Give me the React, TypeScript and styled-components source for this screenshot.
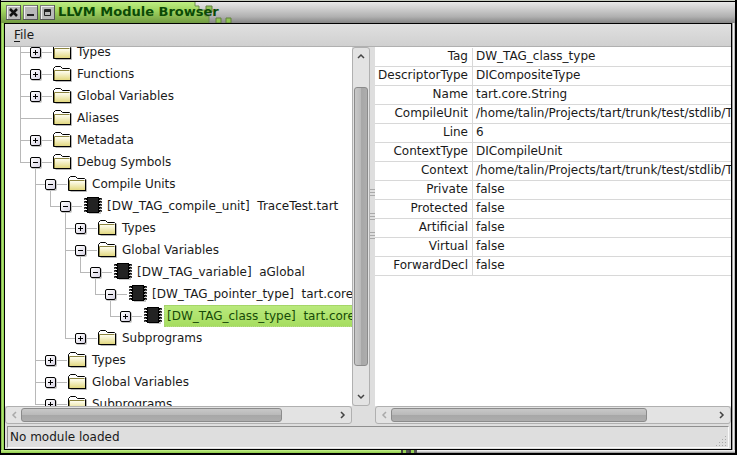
import React from "react";
import styled, { createGlobalStyle, css } from "styled-components";

const Global = createGlobalStyle`
  * { box-sizing: border-box; }
  body { margin: 0; background: #000; overflow: hidden; }
  button { font: inherit; padding: 0; margin: 0; border: 0; background: none; }
`;

const Desktop = styled.div`
  height: 100vh;
  display: flex;
  flex-direction: column;
  padding: 0 2px 2px 1px;
  background: #000;
  color: #1a1a1a;
  font: 12px/22px "DejaVu Sans", sans-serif;
`;

const Backdrop = styled.div`
  flex: none;
  height: 1px;
  margin-bottom: 1px;
  background: #c6cbc0;
`;

const Frame = styled.div`
  flex: 1;
  min-height: 0;
  display: flex;
  flex-direction: column;
  padding: 0 3px 3px;
  background:
    linear-gradient(#fafafa, #d0d0d0 50%, #888) bottom right / calc(100% - 416px) 3px no-repeat,
    repeating-linear-gradient(90deg, #444 0 2px, #96d055 2px 5px, #555 5px 8px) 400px bottom / 16px 3px no-repeat,
    linear-gradient(#c5f08c, #8ecb4b) bottom left / 400px 3px no-repeat,
    linear-gradient(90deg, #6e9a3c, #b4ea78 40%, #8ccb4a) left / 3px 100% no-repeat,
    linear-gradient(90deg, #777, #f0f0f0 50%, #a0a0a0) right / 3px 100% no-repeat;
`;

const TitleBar = styled.header`
  position: relative;
  flex: none;
  height: 21px;
  margin: 0 -3px;
  display: flex;
  align-items: center;
  padding-left: 5px;
  gap: 2px;
  background: linear-gradient(#e8e8e8, #d0d0d0 30%, #b0b0b0 70%, #858585);
`;

const GreenWash = styled.svg`
  position: absolute;
  left: 0;
  top: 0;
`;

const WindowButton = styled.button`
  position: relative;
  width: 15px;
  height: 15px;
  svg { display: block; }
`;

const Title = styled.h1`
  position: relative;
  margin: 0 0 2px 1px;
  color: #0b4a06;
  font: bold 13px/19px "DejaVu Sans", sans-serif;
  white-space: nowrap;
`;

const Client = styled.div`
  flex: 1;
  min-height: 0;
  display: flex;
  flex-direction: column;
  border: 1px solid #000;
  background: #dedede;
`;

const MenuBar = styled.nav`
  flex: none;
  height: 23px;
  display: flex;
  padding-left: 9px;
  border-bottom: 1px solid #b0b0b0;
  background: linear-gradient(#e0e0e0, #d0d0d0);
`;

const MenuButton = styled.button`
  line-height: 22px;
  color: #1a1a1a;
  u { text-underline-offset: 2px; }
`;

const Split = styled.main`
  flex: 1;
  min-height: 0;
  display: grid;
  grid-template-columns: 365fr 5px 356fr;
`;

const TreePane = styled.section`
  min-width: 0;
  min-height: 0;
  display: grid;
  grid-template-columns: minmax(0, 1fr) 18px;
  grid-template-rows: minmax(0, 1fr) 18px;
`;

const DetailPane = styled.section`
  min-width: 0;
  min-height: 0;
  display: grid;
  grid-template-rows: minmax(0, 1fr) 18px;
`;

const Viewport = styled.div`
  overflow: hidden;
  background: #fff;
`;

const Tree = styled.ul`
  list-style: none;
  margin: -6px 0 0;
  padding: 0 0 0 8px;
`;

const TreeRow = styled.li`
  display: flex;
  height: 22px;
`;

const line = "linear-gradient(#b8b8b8, #b8b8b8)";
type GuideKind = "none" | "pass" | "tee" | "end";

const Guide = styled.span<{ $kind: GuideKind }>`
  flex: none;
  width: 15px;
  background-repeat: no-repeat;
  ${({ $kind }) =>
    $kind === "pass" &&
    css`background-image: ${line}; background-size: 1px 100%; background-position: 7px 0;`}
  ${({ $kind }) =>
    $kind === "tee" &&
    css`background-image: ${line}, ${line}; background-size: 1px 100%, 8px 1px; background-position: 7px 0, 7px 11px;`}
  ${({ $kind }) =>
    $kind === "end" &&
    css`background-image: ${line}, ${line}; background-size: 1px 12px, 8px 1px; background-position: 7px 0, 7px 11px;`}
`;

const Branch = styled.span<{ $open: boolean }>`
  flex: none;
  width: 25px;
  padding: 6px 0 0 2px;
  background-repeat: no-repeat;
  background-image: ${line}, ${line};
  background-size: 24px 1px, 1px ${({ $open }) => ($open ? "11px" : "0")};
  background-position: 0 11px, 7px 11px;
`;

const Expander = styled.button`
  display: block;
  width: 11px;
  height: 11px;
  border: 1px solid #000;
  border-radius: 2px;
  background: linear-gradient(135deg, #fff, #d8d4e4);
  box-shadow: 1px 1px 0 #c4c4c4;
  svg { display: block; }
`;

const NodeIcon = styled.svg`
  flex: none;
  display: block;
  width: 20px;
  height: 22px;
`;

const Label = styled.span<{ $selected?: boolean }>`
  flex: 1;
  min-width: 0;
  padding-left: 4px;
  white-space: pre;
  overflow: hidden;
  ${({ $selected }) =>
    $selected &&
    css`
      padding-left: 2px;
      margin-left: 1px;
      border: 1px dotted #a5cf70;
      border-right: 0;
      line-height: 20px;
      color: #174a08;
      background: linear-gradient(#b9e97c, #a6dd60);
    `}
`;

const ScrollBar = styled.div<{ $vertical?: boolean }>`
  display: flex;
  flex-direction: ${({ $vertical }) => ($vertical ? "column" : "row")};
  border: 1px solid #b0b0b0;
  border-radius: 3px;
  background: #e3e3e3;
  padding: 1px;
`;

const ScrollArrow = styled.button`
  flex: none;
  width: 14px;
  height: 14px;
  svg { display: block; }
`;

const ScrollSpace = styled.span<{ $grow: number }>`
  flex: ${({ $grow }) => $grow} 0 0;
`;

const Thumb = styled.span<{ $grow: number; $vertical?: boolean }>`
  flex: ${({ $grow }) => $grow} 0 0;
  border: 1px solid #8b8b8b;
  border-radius: 3px;
  background: linear-gradient(
    ${({ $vertical }) => ($vertical ? "90deg" : "180deg")},
    #c8c8c8, #b9b9b9 50%, #a7a7a7 50%, #adadad
  );
`;

const Splitter = styled.div`
  display: flex;
  flex-direction: column;
  align-items: center;
  padding-top: 141px;
  svg { display: block; }
`;

const Properties = styled.table`
  width: 100%;
  margin-top: 1px;
  table-layout: fixed;
  border-collapse: separate;
  border-spacing: 0;
  line-height: 16px;
  th, td {
    height: 19px;
    border-bottom: 1px solid #d8d8d8;
    vertical-align: top;
    white-space: nowrap;
    overflow: hidden;
    font-weight: normal;
  }
  th {
    width: 98px;
    padding: 0 4px 0 0;
    text-align: right;
    border-right: 1px solid #d8d8d8;
  }
  td { padding: 0 0 0 3px; }
`;

const Footer = styled.footer`
  flex: none;
  height: 25px;
  padding: 2px 2px 1px;
`;

const Status = styled.div`
  display: flex;
  justify-content: space-between;
  align-items: flex-end;
  height: 22px;
  padding-left: 2px;
  line-height: 20px;
  border: 1px solid #8f8f8f;
  border-right-color: #fafafa;
  border-bottom-color: #fafafa;
`;

type Icon = "folder" | "chip";
interface Node {
  label: string;
  icon: Icon;
  guides: string;
  toggle?: "open" | "closed";
  selected?: boolean;
}

/* guides: "|" passing line, " " blank, "+" branch, "L" last branch */
const nodes: Node[] = [
  { label: "Types", icon: "folder", guides: "+", toggle: "closed" },
  { label: "Functions", icon: "folder", guides: "+", toggle: "closed" },
  { label: "Global Variables", icon: "folder", guides: "+", toggle: "closed" },
  { label: "Aliases", icon: "folder", guides: "+" },
  { label: "Metadata", icon: "folder", guides: "+", toggle: "closed" },
  { label: "Debug Symbols", icon: "folder", guides: "L", toggle: "open" },
  { label: "Compile Units", icon: "folder", guides: " +", toggle: "open" },
  { label: "[DW_TAG_compile_unit]  TraceTest.tart", icon: "chip", guides: " |L", toggle: "open" },
  { label: "Types", icon: "folder", guides: " | +", toggle: "closed" },
  { label: "Global Variables", icon: "folder", guides: " | +", toggle: "open" },
  { label: "[DW_TAG_variable]  aGlobal", icon: "chip", guides: " | |L", toggle: "open" },
  { label: "[DW_TAG_pointer_type]  tart.core.String", icon: "chip", guides: " | | L", toggle: "open" },
  { label: "[DW_TAG_class_type]  tart.core.String", icon: "chip", guides: " | |  L", toggle: "closed", selected: true },
  { label: "Subprograms", icon: "folder", guides: " | L", toggle: "closed" },
  { label: "Types", icon: "folder", guides: " +", toggle: "closed" },
  { label: "Global Variables", icon: "folder", guides: " +", toggle: "closed" },
  { label: "Subprograms", icon: "folder", guides: " L", toggle: "closed" },
];

const kinds: Record<string, GuideKind> = { "|": "pass", " ": "none", "+": "tee", L: "end" };

const properties: [string, string][] = [
  ["Tag", "DW_TAG_class_type"],
  ["DescriptorType", "DICompositeType"],
  ["Name", "tart.core.String"],
  ["CompileUnit", "/home/talin/Projects/tart/trunk/test/stdlib/TraceTest.tart"],
  ["Line", "6"],
  ["ContextType", "DICompileUnit"],
  ["Context", "/home/talin/Projects/tart/trunk/test/stdlib/TraceTest.tart"],
  ["Private", "false"],
  ["Protected", "false"],
  ["Artificial", "false"],
  ["Virtual", "false"],
  ["ForwardDecl", "false"],
];

const FolderIcon = () => (
  <NodeIcon viewBox="0 0 20 22" aria-hidden="true">
    <defs>
      <linearGradient id="folder" x1="0" y1="0" x2="0" y2="1">
        <stop offset="0" stopColor="#fffef0" />
        <stop offset="1" stopColor="#e2d880" />
      </linearGradient>
    </defs>
    <path d="M2.5 18.5h16v-12" fill="none" stroke="#b5b5b5" />
    <path d="M.5 17.5v-12l2-2h5l2 2h7l1 1v11z" fill="#fff" stroke="#000" />
    <path d="M2 8h15v9H2z" fill="url(#folder)" />
    <path d="M1.5 17V7.500h15" fill="none" stroke="#8c8440" />
    <path d="M1 17.500h17" stroke="#000" />
  </NodeIcon>
);

const ChipIcon = () => (
  <NodeIcon viewBox="0 0 20 22" aria-hidden="true">
    <path d="M6 4h12v15H6z" fill="#c4c4c4" />
    <path
      d="M2 4h16M2 7h16M2 10h16M2 13h16M2 16h16"
      stroke="#000"
      strokeWidth="2"
      strokeLinecap="round"
    />
    <path
      d="M2 4.500h1M2 7.500h1M2 10.500h1M2 13.500h1M2 16.500h1M17 4.500h1M17 7.500h1M17 10.500h1M17 13.500h1M17 16.500h1"
      stroke="#777"
    />
    <path d="M4 2h12v16H4z" fill="#000" />
    <path d="M5 3h10v14H5z" fill="#222" />
  </NodeIcon>
);

const arrows = {
  up: "M4 9l3-3 3 3",
  down: "M4 5l3 3 3-3",
  left: "M9 4L6 7l3 3",
  right: "M5 4l3 3-3 3",
};

const Arrow = ({ to, off }: { to: keyof typeof arrows; off?: boolean }) => (
  <ScrollArrow aria-label={`Scroll ${to}`} disabled={off}>
    <svg width="14" height="14" aria-hidden="true">
      <path d={arrows[to]} fill="none" stroke={off ? "#aaa" : "#444"} strokeWidth="1.5" />
    </svg>
  </ScrollArrow>
);

const windowGlyphs: [string, React.ReactNode][] = [
  ["Close", <path key="c" d="M4 4l7 7M11 4l-7 7" stroke="#111" strokeWidth="2.5" />],
  ["Minimize", <path key="m" d="M4 10h7" stroke="#222" strokeWidth="2" />],
  ["Shade", <path key="s" d="M4.500 10.500v-6h6v6zM4 5.500h7M4 6.500h7" fill="none" stroke="#222" />],
];

export default function App() {
  return (
    <>
      <Global />
      <Desktop>
        <Backdrop />
        <Frame>
          <TitleBar>
            <GreenWash width="240" height="21" aria-hidden="true">
              <defs>
                <linearGradient id="wash" x1="0" y1="0" x2="0" y2="1">
                  <stop offset="0" stopColor="#bdee82" />
                  <stop offset=".4" stopColor="#a0d560" />
                  <stop offset="1" stopColor="#719a42" />
                </linearGradient>
              </defs>
              <path d="M0 0h194v4h4v4h6v6h4v7H0z" fill="url(#wash)" />
              <path d="M194 0v4h4v4h6v6h4v7" fill="none" stroke="#6c8c4c" />
              <path d="M205 4h6v6h-6zM215 16h5v5h-5zM225 16h5v5h-5z" fill="#8fc552" stroke="#62803f" />
            </GreenWash>
            {windowGlyphs.map(([name, glyph]) => (
              <WindowButton key={name} aria-label={name}>
                <svg width="15" height="15" aria-hidden="true">
                  <rect width="15" height="15" fill="#555" />
                  <path d="M0 0h14v1H1v13H0z" fill="#777" />
                  <rect x="1" y="1" width="13" height="13" fill="#f0f0f0" />
                  <rect x="2" y="2" width="12" height="12" fill="#b9b9b9" />
                  {glyph}
                </svg>
              </WindowButton>
            ))}
            <Title>LLVM Module Browser</Title>
          </TitleBar>
          <Client>
            <MenuBar>
              <MenuButton><u>F</u>ile</MenuButton>
            </MenuBar>
            <Split>
              <TreePane>
                <Viewport>
                  <Tree>
                    {nodes.map((node, i) => (
                      <TreeRow key={i}>
                        {[...node.guides].map((g, k) => <Guide key={k} $kind={kinds[g]} />)}
                        <Branch $open={node.toggle === "open"}>
                          {node.toggle && (
                            <Expander aria-label={node.toggle === "open" ? "Collapse" : "Expand"}>
                              <svg width="9" height="9" aria-hidden="true">
                                <path
                                  d={node.toggle === "open" ? "M2 4.500h5" : "M2 4.500h5M4.500 2v5"}
                                  stroke="#000"
                                />
                              </svg>
                            </Expander>
                          )}
                        </Branch>
                        {node.icon === "folder" ? <FolderIcon /> : <ChipIcon />}
                        <Label $selected={node.selected}>{node.label}</Label>
                      </TreeRow>
                    ))}
                  </Tree>
                </Viewport>
                <ScrollBar $vertical>
                  <Arrow to="up" />
                  <ScrollSpace $grow={24} />
                  <Thumb $grow={279} $vertical />
                  <ScrollSpace $grow={24} />
                  <Arrow to="down" />
                </ScrollBar>
                <ScrollBar>
                  <Arrow to="left" off />
                  <Thumb $grow={261} />
                  <ScrollSpace $grow={54} />
                  <Arrow to="right" />
                </ScrollBar>
              </TreePane>
              <Splitter>
                <svg width="5" height="52" aria-hidden="true">
                  <path
                    d="M0 1.500h5M0 4.500h5M0 7.500h5M0 25.500h5M0 28.500h5M0 31.500h5M0 44.500h5M0 47.500h5M0 50.500h5"
                    stroke="#aaa"
                  />
                </svg>
              </Splitter>
              <DetailPane>
                <Viewport>
                  <Properties>
                    <tbody>
                      {properties.map(([name, value]) => (
                        <tr key={name}>
                          <th scope="row">{name}</th>
                          <td>{value}</td>
                        </tr>
                      ))}
                    </tbody>
                  </Properties>
                </Viewport>
                <ScrollBar>
                  <Arrow to="left" off />
                  <Thumb $grow={256} />
                  <ScrollSpace $grow={68} />
                  <Arrow to="right" />
                </ScrollBar>
              </DetailPane>
            </Split>
            <Footer>
              <Status>
                <span role="status">No module loaded</span>
                <svg width="12" height="12" aria-hidden="true">
                  <path
                    d="M9 1.500h1M6 4.500h1M9 4.500h1M3 7.500h1M6 7.500h1M9 7.500h1M0 10.500h1M3 10.500h1M6 10.500h1M9 10.500h1"
                    stroke="#aaa"
                  />
                </svg>
              </Status>
            </Footer>
          </Client>
        </Frame>
      </Desktop>
    </>
  );
}
